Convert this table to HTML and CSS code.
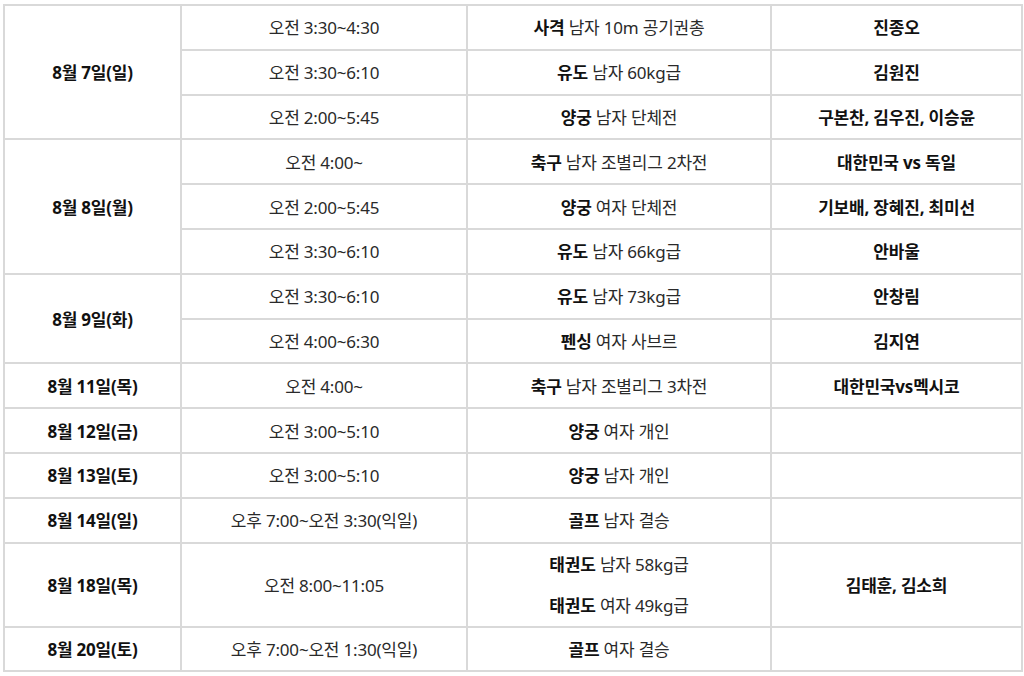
FILE: index.html
```html
<!DOCTYPE html>
<html lang="ko">
<head>
<meta charset="utf-8">
<title>올림픽 경기 일정</title>
<link rel="stylesheet" href="styles.css">
</head>
<body>
<table class="schedule">
  <colgroup>
    <col class="c-date">
    <col class="c-time">
    <col class="c-event">
    <col class="c-player">
  </colgroup>
  <tbody>
    <tr>
      <td class="date" rowspan="3">8월 7일(일)</td>
      <td>오전 3:30~4:30</td>
      <td><b>사격</b> 남자 10m 공기권총</td>
      <td class="player">진종오</td>
    </tr>
    <tr>
      <td>오전 3:30~6:10</td>
      <td><b>유도</b> 남자 60kg급</td>
      <td class="player">김원진</td>
    </tr>
    <tr>
      <td>오전 2:00~5:45</td>
      <td><b>양궁</b> 남자 단체전</td>
      <td class="player">구본찬, 김우진, 이승윤</td>
    </tr>
    <tr>
      <td class="date" rowspan="3">8월 8일(월)</td>
      <td>오전 4:00~</td>
      <td><b>축구</b> 남자 조별리그 2차전</td>
      <td class="player">대한민국 vs 독일</td>
    </tr>
    <tr>
      <td>오전 2:00~5:45</td>
      <td><b>양궁</b> 여자 단체전</td>
      <td class="player">기보배, 장혜진, 최미선</td>
    </tr>
    <tr>
      <td>오전 3:30~6:10</td>
      <td><b>유도</b> 남자 66kg급</td>
      <td class="player">안바울</td>
    </tr>
    <tr>
      <td class="date" rowspan="2">8월 9일(화)</td>
      <td>오전 3:30~6:10</td>
      <td><b>유도</b> 남자 73kg급</td>
      <td class="player">안창림</td>
    </tr>
    <tr>
      <td>오전 4:00~6:30</td>
      <td><b>펜싱</b> 여자 사브르</td>
      <td class="player">김지연</td>
    </tr>
    <tr>
      <td class="date">8월 11일(목)</td>
      <td>오전 4:00~</td>
      <td><b>축구</b> 남자 조별리그 3차전</td>
      <td class="player">대한민국vs멕시코</td>
    </tr>
    <tr>
      <td class="date">8월 12일(금)</td>
      <td>오전 3:00~5:10</td>
      <td><b>양궁</b> 여자 개인</td>
      <td class="player"></td>
    </tr>
    <tr>
      <td class="date">8월 13일(토)</td>
      <td>오전 3:00~5:10</td>
      <td><b>양궁</b> 남자 개인</td>
      <td class="player"></td>
    </tr>
    <tr>
      <td class="date">8월 14일(일)</td>
      <td>오후 7:00~오전 3:30(익일)</td>
      <td><b>골프</b> 남자 결승</td>
      <td class="player"></td>
    </tr>
    <tr class="tall">
      <td class="date">8월 18일(목)</td>
      <td>오전 8:00~11:05</td>
      <td class="multi"><p><b>태권도</b> 남자 58kg급</p><p><b>태권도</b> 여자 49kg급</p></td>
      <td class="player">김태훈, 김소희</td>
    </tr>
    <tr>
      <td class="date">8월 20일(토)</td>
      <td>오후 7:00~오전 1:30(익일)</td>
      <td><b>골프</b> 여자 결승</td>
      <td class="player"></td>
    </tr>
  </tbody>
</table>
</body>
</html>
```

FILE: styles.css
```css
html, body {
  margin: 0;
  padding: 0;
  background: #ffffff;
}

body {
  padding: 4px 0 0 3px;
  font-family: "Noto Sans", "Noto Sans CJK KR", sans-serif;
  color: #222222;
}

.schedule {
  border-collapse: separate;
  border-spacing: 0;
  table-layout: fixed;
  width: 1020px;
  border-top: 2px solid #d9d9d9;
  border-left: 2px solid #d9d9d9;
  font-size: 17px;
}

.c-date { width: 177px; }
.c-time { width: 286px; }
.c-event { width: 304px; }
.c-player { width: 251px; }

.schedule td {
  border-right: 2px solid #d9d9d9;
  border-bottom: 2px solid #d9d9d9;
  text-align: center;
  vertical-align: middle;
  padding: 2px 0 0;
  height: 40.8px;
  line-height: 20px;
  font-weight: 400;
  color: #2a2a2a;
  letter-spacing: -0.2px;
}

.schedule td.date,
.schedule td.player {
  font-weight: 700;
  color: #111111;
}

.schedule b {
  font-weight: 700;
  color: #111111;
}

.schedule tr.tall td {
  height: 80px;
}

.schedule td.multi {
  padding: 0;
  height: 82px;
}

.multi p {
  margin: 0;
  line-height: 41px;
}
```
